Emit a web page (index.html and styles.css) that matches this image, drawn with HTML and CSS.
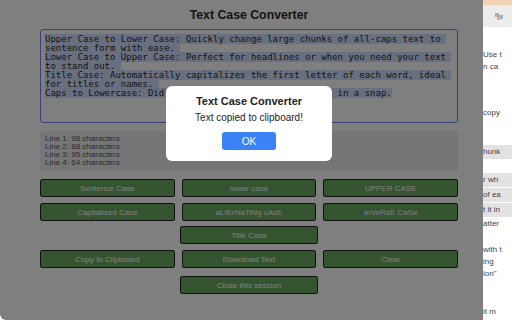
FILE: index.html
```html
<!DOCTYPE html>
<html lang="en">

<head>
    <meta charset="UTF-8">
    <meta name="viewport" content="width=device-width, initial-scale=1.0">
    <title>Text Case Converter</title>
    <link rel="stylesheet" href="styles.css">
</head>

<body>
    <div class="popup">
        <div class="content">
            <h1 class="title">Text Case Converter</h1>

            <div class="editor">
                <div><span class="sel">Upper Case to Lower Case: Quickly change large chunks of all-caps text to </span></div>
                <div><span class="sel">sentence form with ease. </span></div>
                <div><span class="sel">Lower Case to Upper Case: Perfect for headlines or when you need your text </span></div>
                <div><span class="sel">to stand out. </span></div>
                <div><span class="sel">Title Case: Automatically capitalizes the first letter of each word, ideal </span></div>
                <div><span class="sel">for titles or names. </span></div>
                <div><span class="sel">Caps to Lowercase: Did you leave caps lock on? Fix it in a snap.</span></div>
            </div>

            <div class="stats">
                <div>Line 1: 98 characters</div>
                <div>Line 2: 88 characters</div>
                <div>Line 3: 95 characters</div>
                <div>Line 4: 64 characters</div>
            </div>

            <div class="buttons">
                <button class="btn">Sentence Case</button>
                <button class="btn">lower case</button>
                <button class="btn">UPPER CASE</button>
                <button class="btn">Capitalized Case</button>
                <button class="btn">aLtErNaTiNg cAsE</button>
                <button class="btn">InVeRsE CaSe</button>
            </div>

            <button class="btn single">Title Case</button>

            <div class="buttons">
                <button class="btn">Copy to Clipboard</button>
                <button class="btn">Download Text</button>
                <button class="btn">Clear</button>
            </div>

            <button class="btn single close">Close this session</button>
        </div>

        <div class="overlay">
            <div class="dialog">
                <div class="dialog-title">Text Case Converter</div>
                <div class="dialog-text">Text copied to clipboard!</div>
                <button class="ok">OK</button>
            </div>
        </div>
    </div>

    <div class="page">
        <div class="page-top"></div>
        <div class="page-bar">
            <svg width="9" height="9" viewBox="0 0 9 9">
                <rect x="0" y="1" width="4" height="4" fill="#c9a0a0"/>
                <rect x="4" y="3" width="4" height="4" fill="#a0b0d0"/>
                <rect x="2" y="5" width="3" height="3" fill="#d6b46a"/>
            </svg>
        </div>
        <div class="page-text">
            <div class="frag" style="margin-top: 22px">Use t</div>
            <div class="frag">n ca</div>
            <div class="frag" style="margin-top: 34px">copy</div>
            <div class="frag band" style="margin-top: 26px">hunk</div>
            <div class="frag band" style="margin-top: 13px">r wh</div>
            <div class="frag band">of ea</div>
            <div class="frag band">t it in</div>
            <div class="frag">atter</div>
            <div class="frag" style="margin-top: 14px">with t</div>
            <div class="frag">ing</div>
            <div class="frag">ion"</div>
            <div class="frag" style="margin-top: 26px">it m</div>
        </div>
    </div>
</body>

</html>
```

FILE: styles.css
```css
body {
    margin: 0;
    padding: 0;
    width: 512px;
    height: 320px;
    overflow: hidden;
    display: flex;
    background-color: #ffffff;
    font-family: "Liberation Sans", Arial, sans-serif;
}

.popup {
    position: relative;
    width: 483px;
    height: 320px;
    background-color: #ffffff;
    border-bottom-left-radius: 6px;
    overflow: hidden;
}

.content {
    width: 418px;
    padding-left: 40px;
    display: flex;
    flex-direction: column;
    align-items: center;
}

.title {
    margin: 0;
    height: 29px;
    line-height: 30px;
    font-size: 12.3px;
    font-weight: bold;
    color: #2a2a2a;
}

.editor {
    box-sizing: border-box;
    width: 418px;
    height: 94px;
    padding: 5px 4px;
    border: 1px solid #6c88e8;
    border-radius: 3px;
    font-family: "DejaVu Sans Mono", monospace;
    font-size: 9px;
    line-height: 9px;
    color: #2a2a2a;
}

.editor div {
    white-space: pre;
    height: 9px;
}

.sel {
    background-color: #d0e0ff;
}

.stats {
    box-sizing: border-box;
    width: 418px;
    height: 40px;
    margin-top: 8px;
    padding: 4px 5px;
    background-color: #ededed;
    border-radius: 3px;
    font-size: 8px;
    line-height: 8px;
    color: #555555;
}

.buttons {
    width: 418px;
    display: grid;
    grid-template-columns: 1fr 1fr 1fr;
    gap: 6px 7px;
    margin-top: 8px;
}

.btn {
    box-sizing: border-box;
    height: 18px;
    padding: 0;
    background-color: #68a85e;
    border: 1px solid #222222;
    border-radius: 2px;
    font-family: "Liberation Sans", Arial, sans-serif;
    font-size: 8px;
    color: #ffffff;
}

.single {
    width: 138px;
    margin-top: 5px;
    margin-bottom: -2px;
}

.close {
    margin-top: 8px;
}

.overlay {
    position: absolute;
    top: 0;
    left: 0;
    right: 0;
    bottom: 0;
    background-color: rgba(0, 0, 0, 0.5);
}

.dialog {
    position: absolute;
    left: 166px;
    top: 86px;
    width: 166px;
    height: 75px;
    background-color: #ffffff;
    border-radius: 6px;
    display: flex;
    flex-direction: column;
    align-items: center;
}

.dialog-title {
    margin-top: 9px;
    font-size: 11px;
    font-weight: bold;
    color: #222222;
}

.dialog-text {
    margin-top: 5px;
    font-size: 10px;
    color: #222222;
}

.ok {
    width: 54px;
    height: 18px;
    margin-top: 9px;
    padding: 0;
    background-color: #3b82f6;
    border: none;
    border-radius: 3px;
    font-family: "Liberation Sans", Arial, sans-serif;
    font-size: 10px;
    color: #ffffff;
}

.page {
    flex: 1;
    display: flex;
    flex-direction: column;
    background-color: #ffffff;
    overflow: hidden;
}

.page-top {
    height: 5px;
    background-color: #f4d2b6;
}

.page-bar {
    height: 22px;
    background-color: #ececec;
    display: flex;
    align-items: center;
    padding-left: 12px;
}

.page-text {
    display: flex;
    flex-direction: column;
}

.frag {
    height: 12px;
    font-size: 8px;
    line-height: 12px;
    color: #444444;
    white-space: nowrap;
}

.band {
    height: 14px;
    line-height: 14px;
    background-color: #e2e2e2;
    margin-bottom: 1px;
}
```
